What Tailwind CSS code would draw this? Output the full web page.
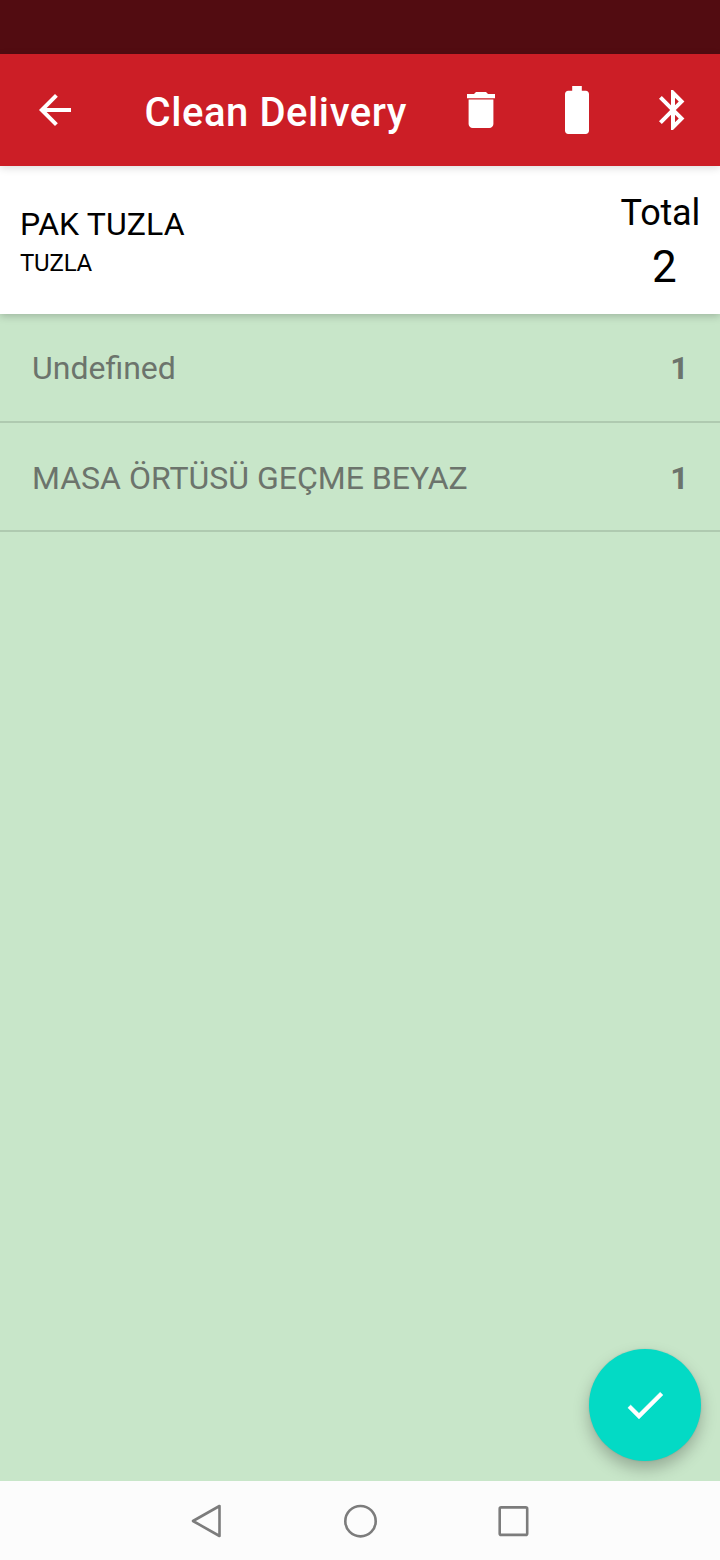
<!DOCTYPE html>
<html lang="en">
<head>
<meta charset="utf-8"/>
<meta content="width=device-width, initial-scale=1.0" name="viewport"/>
<title>Clean Delivery</title>
<script src="https://cdn.jsdelivr.net/npm/@tailwindcss/browser@4"></script>
</head>
<body class="bg-[#c8e6c9] font-['Roboto',sans-serif]">
<div class="w-[720px] h-[1560px] flex flex-col overflow-hidden">
<!-- Status bar -->
<div class="h-[54px] shrink-0 bg-[#520c11]"></div>
<!-- App bar -->
<header class="relative z-20 h-28 shrink-0 flex items-center bg-[#cc1e26] text-white pl-[30.5px] pr-[23.5px] shadow-[0_2px_8px_rgba(0,0,0,0.14)]">
<button aria-label="Back" class="pb-px">
<svg class="size-12" fill="currentColor" viewBox="0 0 24 24"><path d="M20 11H7.83l5.59-5.59L12 4l-8 8 8 8 1.41-1.41L7.83 13H20v-2z"/></svg>
</button>
<h1 class="ml-[66px] pt-1.5 text-[40px] leading-[48px] font-medium tracking-[0.57px] whitespace-nowrap">Clean Delivery</h1>
<div class="ml-auto flex gap-12">
<svg class="size-12" fill="currentColor" viewBox="0 0 24 24"><path d="M5.8 19c0 1.1.9 2 2 2h8.4c1.1 0 2-.9 2-2V6.8H5.8V19zM19 4h-3.5l-1-1h-5l-1 1H5v2.1h14V4z"/></svg>
<svg class="size-12" fill="currentColor" viewBox="2 2 20 20"><path d="M15.67 4H14V2h-4v2H8.33C7.6 4 7 4.6 7 5.33v15.33C7 21.4 7.6 22 8.33 22h7.33c.74 0 1.34-.6 1.34-1.33V5.33C17 4.6 16.4 4 15.67 4z"/></svg>
<svg class="size-12" fill="currentColor" viewBox="0 0 24 24"><path d="M17.71 7.71L12 2h-1v7.59L6.41 5 5 6.41 10.59 12 5 17.59 6.41 19 11 14.41V22h1l5.71-5.71-4.3-4.29 4.3-4.29zM13 5.83l1.88 1.88L13 9.59V5.83zm1.88 10.46L13 18.17v-3.76l1.88 1.88z"/></svg>
</div>
</header>
<!-- Customer -->
<section class="relative z-10 h-[148px] shrink-0 flex items-center justify-between bg-white text-black px-5 shadow-[0_2px_8px_rgba(0,0,0,0.22)]">
<div class="pt-1">
<p class="text-[32px] leading-[42px] tracking-[0.1px]">PAK TUZLA</p>
<p class="text-[24px] leading-[36px] tracking-[-0.2px]">TUZLA</p>
</div>
<div class="pt-1 pl-px text-center">
<p class="text-[36px] leading-[50px] tracking-[-0.2px]">Total</p>
<p class="pl-2 text-[44px] leading-[58px]">2</p>
</div>
</section>
<!-- Items -->
<ul class="flex-1 text-[32px] text-[#6c746c]">
<li class="h-[109px] flex items-center justify-between border-b-2 border-[#afcab0] pl-8 pr-[31.5px] pt-px">
<span>Undefined</span><span class="font-bold">1</span>
</li>
<li class="h-[109px] flex items-center justify-between border-b-2 border-[#afcab0] pl-8 pr-[31.5px] pt-0.5">
<span>MASA ÖRTÜSÜ GEÇME BEYAZ</span><span class="font-bold">1</span>
</li>
</ul>
<!-- Navigation bar -->
<nav class="relative z-10 h-[79px] shrink-0 flex items-center justify-center gap-[113px] bg-[#fcfcfc] text-[#7c7c7c]">
<svg class="size-10" fill="none" stroke="currentColor" stroke-linejoin="round" stroke-width="2.6" viewBox="0 0 40 40"><path d="M6 20L32.5 5v30z"/></svg>
<svg class="size-10" fill="none" stroke="currentColor" stroke-width="2.6" viewBox="0 0 40 40"><circle cx="20.5" cy="20.2" r="15.2"/></svg>
<svg class="size-10" fill="none" stroke="currentColor" stroke-width="2.6" viewBox="0 0 40 40"><rect height="27.5" rx="1.5" width="27.5" x="6.7" y="6.4"/></svg>
</nav>
</div>
<!-- Confirm button -->
<button aria-label="Confirm" class="absolute left-[589px] top-[1349px] size-28 rounded-full bg-[#03dac5] text-white flex items-center justify-center shadow-[0_8px_16px_rgba(0,0,0,0.25),0_0_2px_rgba(0,0,0,0.12)]">
<svg class="size-12" fill="currentColor" viewBox="0 0 24 24"><path d="M9 16.17L4.83 12l-1.42 1.41L9 19 21 7l-1.41-1.41z" stroke="currentColor" stroke-width="0.2"/></svg>
</button>
</body>
</html>
